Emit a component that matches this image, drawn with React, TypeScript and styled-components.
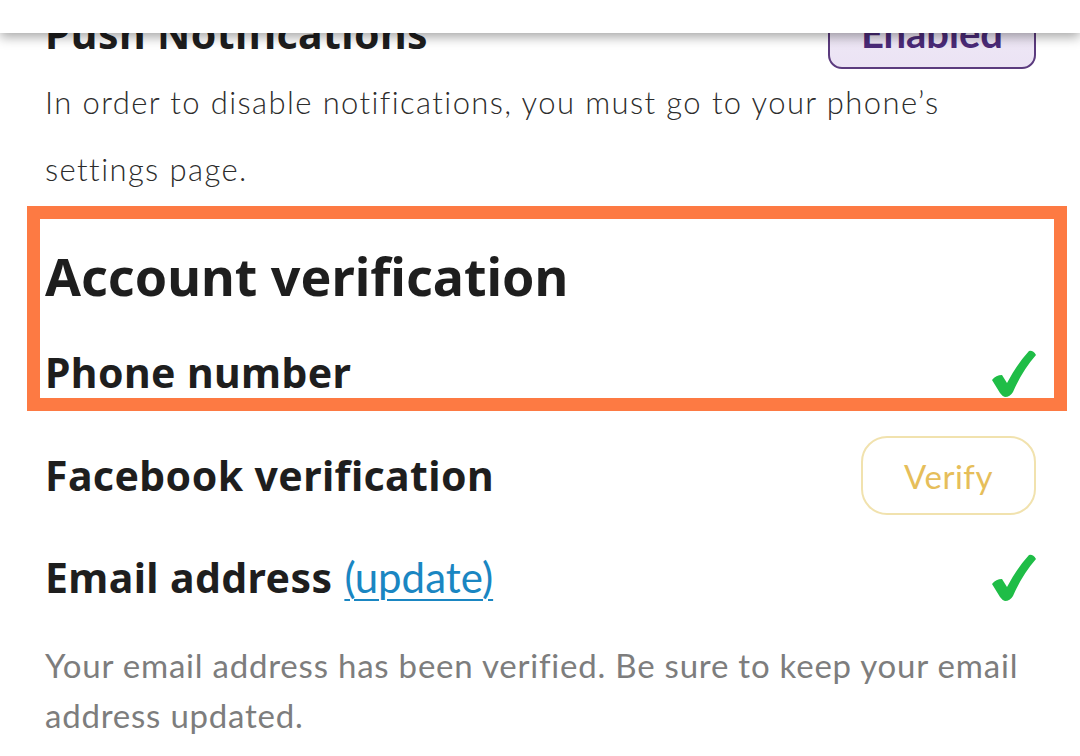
import React from "react";
import styled, { createGlobalStyle } from "styled-components";

const Global = createGlobalStyle`
  html, body { margin: 0; padding: 0; background: #ffffff; }
  body { font-family: "Lato", "Noto Sans", sans-serif; -webkit-font-smoothing: antialiased; }
  * { box-sizing: border-box; }
`;

const Page = styled.div`
  width: 1080px;
  height: 756px;
  overflow: hidden;
  position: relative;
  background: #ffffff;
`;

const TopBar = styled.div`
  position: absolute;
  left: 0;
  top: 0;
  width: 100%;
  height: 33px;
  background: #ffffff;
  box-shadow: 0 4px 12px rgba(0, 0, 0, 0.35);
  z-index: 2;
`;

const Content = styled.div`
  display: flex;
  flex-direction: column;
  padding: 0 44px 0 45px;
  margin-top: -3px;
`;

const Row = styled.div<{ $h: number; $mt?: number }>`
  display: flex;
  align-items: center;
  justify-content: space-between;
  height: ${(p) => p.$h}px;
  margin-top: ${(p) => p.$mt ?? 0}px;
`;

const Title = styled.div`
  font-family: "Noto Sans", "Lato", sans-serif;
  font-size: 41px;
  font-weight: 700;
  letter-spacing: 0.4px;
  color: #1e1e1e;
  line-height: 1;
  white-space: nowrap;
`;

const UpdateLink = styled.a`
  font-family: "Lato", sans-serif;
  font-size: 42px;
  font-weight: 400;
  letter-spacing: 0;
  color: #1a86c2;
  text-decoration: underline;
  text-decoration-thickness: 2px;
  text-underline-offset: 6px;
  margin-left: 12px;
`;

const Heading = styled.h2`
  margin: 0 0 39px;
  font-family: "Noto Sans", "Lato", sans-serif;
  font-size: 52px;
  font-weight: 700;
  line-height: 65px;
  color: #1e1e1e;
`;

const Note = styled.p<{ $muted?: boolean }>`
  margin: ${(p) => (p.$muted ? "24px 0 0" : "0")};
  font-size: ${(p) => (p.$muted ? 33 : 31)}px;
  line-height: ${(p) => (p.$muted ? 50 : 67)}px;
  font-weight: ${(p) => (p.$muted ? 400 : 300)};
  letter-spacing: ${(p) => (p.$muted ? 0.78 : 1.4)}px;
  color: ${(p) => (p.$muted ? "#7d7d7d" : "#2c2c2c")};
`;

const Highlight = styled.section`
  border: 13px solid #fd7a43;
  margin: 3px -31px 0 -18px;
  padding: 24px 18px 0 5px;
  height: 205px;
`;

const PillButton = styled.button<{ $tone: "purple" | "gold" }>`
  font-family: "Lato", "Noto Sans", sans-serif;
  cursor: pointer;
  ${(p) =>
    p.$tone === "purple"
      ? `
    width: 208px;
    height: 72px;
    border-radius: 14px;
    border: 2px solid #5b3b7e;
    background: linear-gradient(#f2ecf8, #ebe3f4);
    color: #4b2a78;
    font-size: 40px;
    font-weight: 700;
  `
      : `
    width: 175px;
    height: 79px;
    border-radius: 26px;
    border: 2px solid #f1e2ae;
    background: #ffffff;
    color: #e6be5a;
    font-size: 33px;
    font-weight: 400;
    letter-spacing: 0.5px;
  `}
`;

const CheckIcon = () => (
  <svg width="44" height="48" viewBox="0 0 44 48" aria-hidden>
    <path
      d="M0 31 Q4 26 10 26 L15 34 Q25 15 37 2 Q41 1 44 6 Q30 22 21 43 Q18 48 13 48 Q10 47 8 44 Z"
      fill="#1fbd47"
    />
  </svg>
);

export default function App() {
  return (
    <Page>
      <Global />
      <TopBar />
      <Content>
        <Row $h={72}>
          <Title>Push Notifications</Title>
          <PillButton $tone="purple">Enabled</PillButton>
        </Row>
        <Note>
          In order to disable notifications, you must go to your phone’s settings page.
        </Note>
        <Highlight>
          <Heading>Account verification</Heading>
          <Row $h={51}>
            <Title>Phone number</Title>
            <CheckIcon />
          </Row>
        </Highlight>
        <Row $h={79} $mt={25}>
          <Title>Facebook verification</Title>
          <PillButton $tone="gold">Verify</PillButton>
        </Row>
        <Row $h={79} $mt={22}>
          <Title>
            Email address<UpdateLink href="#">(update)</UpdateLink>
          </Title>
          <CheckIcon />
        </Row>
        <Note $muted>
          Your email address has been verified. Be sure to keep your email address updated.
        </Note>
      </Content>
    </Page>
  );
}
